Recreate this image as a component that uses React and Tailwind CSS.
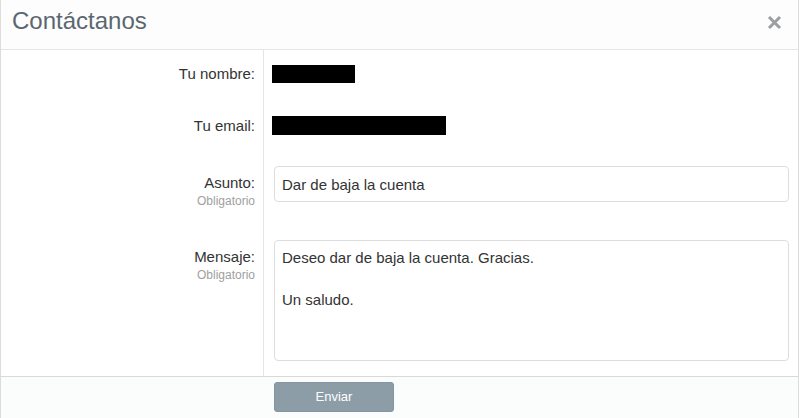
import React from 'react';

const font = { fontFamily: '"Liberation Sans", Arial, sans-serif' };

const Label = ({ children, required, className = '' }) => (
  <div className={`w-[263px] shrink-0 border-r border-[#e5e5e5] pr-[8px] text-right ${className}`}>
    <div className="text-[15px] leading-[20px] text-[#333]">{children}</div>
    {required && <div className="text-[12px] leading-[14px] text-[#a0a0a0] mt-[1px]">Obligatorio</div>}
  </div>
);

export default function App() {
  return (
    <div
      className="w-[799px] h-[418px] bg-white border-x border-[#dcdcdc] flex flex-col overflow-hidden"
      style={font}
    >
      <div className="h-[50px] shrink-0 border-b border-[#e5e5e5] bg-[#fdfdfd] flex items-center justify-between pl-[11px] pr-[16px]">
        <h1 className="text-[24px] leading-[28px] text-[#5b6770] pb-[8px]">Contáctanos</h1>
        <button className="text-[#9b9fa3] pb-[5px]" aria-label="Cerrar">
          <svg width="15" height="15" viewBox="0 0 15 15">
            <path d="M2 2 L13 13 M13 2 L2 13" stroke="currentColor" strokeWidth="3" />
          </svg>
        </button>
      </div>

      <div className="flex-1 flex flex-col">
        <div className="flex">
          <Label className="pt-[14px] pb-[16px]">Tu nombre:</Label>
          <div className="flex-1 pl-[8px] pt-[15px] pb-[16px]">
            <div className="w-[83px] h-[18px] bg-black" />
          </div>
        </div>
        <div className="flex">
          <Label className="pt-[16px] pb-[15px]">Tu email:</Label>
          <div className="flex-1 pl-[8px] pt-[16px] pb-[15px]">
            <div className="w-[174px] h-[19px] bg-black" />
          </div>
        </div>
        <div className="flex">
          <Label required className="pt-[22px]">Asunto:</Label>
          <div className="flex-1 pl-[10px] pr-[9px] pt-[15px] pb-[38px]">
            <input
              readOnly
              defaultValue="Dar de baja la cuenta"
              className="w-full h-[36px] border border-[#dddddd] rounded-[4px] px-[7px] text-[15px] text-[#333] bg-white outline-none"
              style={font}
            />
          </div>
        </div>
        <div className="flex flex-1">
          <Label required className="pt-[7px]">Mensaje:</Label>
          <div className="flex-1 pl-[10px] pr-[9px] pb-[15px]">
            <textarea
              readOnly
              defaultValue={'Deseo dar de baja la cuenta. Gracias.\n\nUn saludo.'}
              className="block w-full h-[121px] border border-[#dddddd] rounded-[4px] px-[7px] pt-[6px] text-[15px] leading-[21px] text-[#333] bg-white resize-none outline-none"
              style={font}
            />
          </div>
        </div>
      </div>

      <div className="h-[42px] shrink-0 border-t border-[#d9d9d9] bg-[#fbfcfc] pl-[273px] pt-[5px]">
        <button className="w-[120px] h-[30px] rounded-[3px] bg-[#8d9da7] border border-[#85959f] text-white text-[13px]">
          Enviar
        </button>
      </div>
    </div>
  );
}
